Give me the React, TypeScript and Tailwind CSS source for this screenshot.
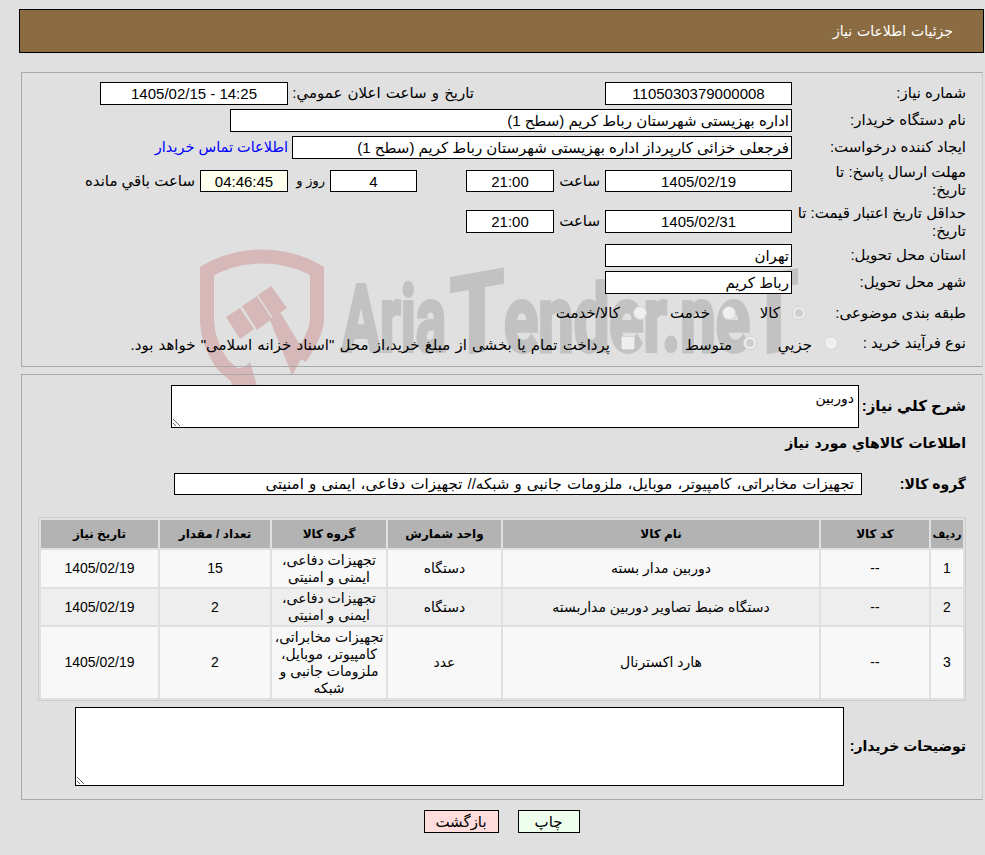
import React from "react";

const Box = ({ className = "", children }: { className?: string; children?: React.ReactNode }) => (
  <div className={`h-[23px] shrink-0 border border-black bg-white flex items-center justify-center whitespace-nowrap leading-none ${className}`}>
    {children}
  </div>
);

const Radio = ({ checked = false }: { checked?: boolean }) => (
  <span className="w-[14px] h-[14px] shrink-0 rounded-full border border-[#d4d4d4] bg-[#efefef] flex items-center justify-center">
    {checked && <span className="w-[8px] h-[8px] rounded-full bg-[#cfcfcf]" />}
  </span>
);

const Watermark = () => (
  <svg className="absolute left-[190px] top-[240px] w-[620px] h-[160px] [direction:ltr]" viewBox="0 0 620 160" aria-hidden="true">
    <g fill="#d6b8b8">
      <path d="M50 140 L33 125 Q18 105 17 80 L17 31 Q42 16.5 72 16.5 Q102 16.5 127 31 L127 80 Q126 95 110 118" fill="none" stroke="#d6b8b8" strokeWidth="14" />
      <polygon points="55,127 60,122 67,145 42,145 37,130" />
      <polygon points="80,80 90,72 115,113 102,135" />
      <polygon points="36,77 50,68 64,89 50,99" />
      <polygon points="52,66 67,56 82,79 67,90" />
      <polygon points="68,55 81,46 97,68 83,78" />
    </g>
    <g fill="#c2c2c2" stroke="#c2c2c2" strokeWidth="4" fontFamily="Roboto, sans-serif" fontWeight="700" fontSize="92" textAnchor="start">
      <text x="152" y="111" textLength="104" lengthAdjust="spacingAndGlyphs">Aria</text>
      <text x="260" y="111" fontSize="108" textLength="54" lengthAdjust="spacingAndGlyphs" transform="translate(287 111) skewY(-10) translate(-287 -111)">T</text>
      <text x="314" y="111" textLength="246" lengthAdjust="spacingAndGlyphs">ender.ne</text>
      <text x="560" y="111" fontSize="108" textLength="48" lengthAdjust="spacingAndGlyphs" transform="translate(584 111) skewY(-10) translate(-584 -111)">T</text>
    </g>
  </svg>
);

const cols = ["w-[32px]", "w-[108px]", "w-[316px]", "w-[113px]", "w-[114px]", "w-[110px]", "w-[117px]"];
const heads = ["رديف", "کد کالا", "نام کالا", "واحد شمارش", "گروه کالا", "تعداد / مقدار", "تاریخ نیاز"];
const rows = [
  { h: "h-[37px]", bg: "bg-[#f8f8f8]", c: ["1", "--", "دوربین مدار بسته", "دستگاه", "تجهیزات دفاعی،\nایمنی و امنیتی", "15", "1405/02/19"] },
  { h: "h-[36px]", bg: "bg-[#eeeeee]", c: ["2", "--", "دستگاه ضبط تصاویر دوربین مداربسته", "دستگاه", "تجهیزات دفاعی،\nایمنی و امنیتی", "2", "1405/02/19"] },
  { h: "h-[71px]", bg: "bg-[#f8f8f8]", c: ["3", "--", "هارد اکسترنال", "عدد", "تجهیزات مخابراتی،\nکامپیوتر، موبایل،\nملزومات جانبی و\nشبکه", "2", "1405/02/19"] },
];

export default function App() {
  return (
    <div dir="rtl" className="relative w-[985px] h-[855px] overflow-hidden bg-[#e0e0e0] pt-[9px] text-[15px] text-black [font-family:'Liberation_Sans','DejaVu_Sans',sans-serif]">
      <Watermark />
      <div className="relative">
        <header className="h-[44px] w-[965px] ms-[1px] border border-black bg-[#8b6b42] text-white flex items-center ps-[30px] text-[14px] [word-spacing:1px]">
          جزئیات اطلاعات نیاز
        </header>

        <section className="w-[962px] ms-[2px] mt-[19px] h-[295px] border border-[#a9a9a9] border-r-[#cfcfcf] pt-[9px] pr-[16px]">
          <div className="flex items-center">
            <div className="w-[174px] shrink-0">شماره نیاز:</div>
            <Box className="w-[187px]">1105030379000008</Box>
            <div className="w-[131px] shrink-0" />
            <div className="w-[186px] shrink-0 whitespace-nowrap [word-spacing:1px]">تاریخ و ساعت اعلان عمومي:</div>
            <Box className="w-[188px]">14:25 - 1405/02/15</Box>
          </div>
          <div className="flex items-center mt-[4px]">
            <div className="w-[174px] shrink-0">نام دستگاه خریدار:</div>
            <Box className="w-[562px] !justify-start pr-[2px]">اداره بهزیستی شهرستان رباط کریم (سطح 1)</Box>
          </div>
          <div className="flex items-center mt-[4px]">
            <div className="w-[174px] shrink-0">ایجاد کننده درخواست:</div>
            <Box className="w-[500px] !justify-start pr-[2px]">فرجعلی خزائی کارپرداز اداره بهزیستی شهرستان رباط کریم (سطح 1)</Box>
            <a className="mr-[4px] text-[#0000ff] whitespace-nowrap text-[14.5px]">اطلاعات تماس خریدار</a>
          </div>
          <div className="flex items-center mt-[4px] h-[36px]">
            <div className="w-[174px] shrink-0 leading-[18px]">مهلت ارسال پاسخ: تا<br />تاریخ:</div>
            <Box className="w-[187px] !h-[22px]">1405/02/19</Box>
            <div className="w-[51px] shrink-0 pr-[5px]">ساعت</div>
            <Box className="w-[88px] !h-[22px]">21:00</Box>
            <div className="w-[49px] shrink-0" />
            <Box className="w-[87px] !h-[22px]">4</Box>
            <div className="w-[42px] shrink-0 pr-[5px] text-[13px] whitespace-nowrap">روز و</div>
            <Box className="w-[88px] !h-[22px] !bg-[#ffffee]">04:46:45</Box>
            <div className="pr-[5px] whitespace-nowrap">ساعت باقي مانده</div>
          </div>
          <div className="flex items-center mt-[6px] h-[33px]">
            <div className="w-[174px] shrink-0 leading-[18px]">حداقل تاریخ اعتبار قیمت: تا تاریخ:</div>
            <Box className="w-[187px]">1405/02/31</Box>
            <div className="w-[51px] shrink-0 pr-[5px]">ساعت</div>
            <Box className="w-[88px]">21:00</Box>
          </div>
          <div className="flex items-center mt-[6px]">
            <div className="w-[174px] shrink-0">استان محل تحویل:</div>
            <Box className="w-[187px] !justify-start pr-[2px]">تهران</Box>
          </div>
          <div className="flex items-center mt-[4px]">
            <div className="w-[174px] shrink-0">شهر محل تحویل:</div>
            <Box className="w-[187px] !justify-start pr-[2px]">رباط کریم</Box>
          </div>
          <div className="flex items-center mt-[4px] h-[30px]">
            <div className="w-[160px] shrink-0">طبقه بندی موضوعی:</div>
            <Radio checked />
            <div className="w-[56px] shrink-0 pr-[12px]">کالا</div>
            <Radio />
            <div className="w-[75px] shrink-0 pr-[12px]">خدمت</div>
            <Radio />
            <div className="shrink-0 pr-[13px]">کالا/خدمت</div>
          </div>
          <div className="flex items-center h-[30px]">
            <div className="w-[128px] shrink-0">نوع فرآیند خرید :</div>
            <Radio />
            <div className="w-[67px] shrink-0 pr-[12px] mt-[4px]">جزیي</div>
            <Radio checked />
            <div className="w-[108px] shrink-0 pr-[11px] mt-[4px]">متوسط</div>
            <span className="w-[14px] h-[14px] shrink-0 rounded-[2px] border border-[#d4d4d4] bg-[#efefef]" />
            <div className="pr-[11px] mt-[4px] whitespace-nowrap [word-spacing:1px]">پرداخت تمام یا بخشی از مبلغ خرید،از محل "اسناد خزانه اسلامی" خواهد بود.</div>
          </div>
        </section>

        <section className="w-[962px] ms-[2px] mt-[7px] h-[426px] border border-[#a9a9a9] border-r-[#cfcfcf] pt-[10px] pr-[16px] font-normal">
          <div className="flex items-center h-[43px]">
            <div className="w-[107px] shrink-0 font-bold text-[15px] whitespace-nowrap">شرح كلي نياز:</div>
            <textarea readOnly defaultValue="دوربین" className="w-[688px] h-[43px] border border-black bg-white resize pr-[4px] pt-[2px] text-[14px] outline-none" />
          </div>
          <div className="h-[22px] mt-[4px] flex items-center font-bold text-[14px] [word-spacing:1px]">اطلاعات كالاهاي مورد نياز</div>
          <div className="flex items-center mt-[19px]">
            <div className="w-[104px] shrink-0 font-bold text-[14px]">گروه کالا:</div>
            <div className="w-[688px] h-[22px] shrink-0 border border-black bg-white flex items-center pr-[7px] whitespace-nowrap overflow-hidden [word-spacing:1px]">
              تجهیزات مخابراتی، کامپیوتر، موبایل، ملزومات جانبی و شبکه// تجهیزات دفاعی، ایمنی و امنیتی
            </div>
          </div>
          <table className="mt-[22px] w-[928px] table-fixed border-separate border-spacing-[2px] border border-[#cccccc] text-center">
            <colgroup>
              {cols.map((c, i) => (
                <col key={i} className={c} />
              ))}
            </colgroup>
            <thead>
              <tr className="h-[28px]">
                {heads.map((h, i) => (
                  <th key={i} className={`bg-[#b3b3b3] p-0 font-bold whitespace-nowrap ${i === 0 ? "text-[11px]" : "text-[12px]"}`}>{h}</th>
                ))}
              </tr>
            </thead>
            <tbody>
              {rows.map((r, i) => (
                <tr key={i} className={r.h}>
                  {r.c.map((c, j) => (
                    <td key={j} className={`${r.bg} p-0 text-[14px] leading-[17px] ${j === 4 ? "whitespace-pre" : ""}`}>{c}</td>
                  ))}
                </tr>
              ))}
            </tbody>
          </table>
          <div className="flex items-center mt-[6px] h-[79px]">
            <div className="w-[122px] shrink-0 font-bold text-[14px] whitespace-nowrap">توضیحات خریدار:</div>
            <textarea readOnly className="w-[769px] h-[79px] border border-black bg-white resize outline-none" />
          </div>
        </section>

        <div className="flex justify-center gap-[19px] mt-[10px] pl-[18px]">
          <button className="w-[62px] h-[23px] border border-black bg-[#eeffee] leading-none">چاپ</button>
          <button className="w-[75px] h-[23px] border border-black bg-[#ffdddd] leading-none">بازگشت</button>
        </div>
      </div>
    </div>
  );
}
